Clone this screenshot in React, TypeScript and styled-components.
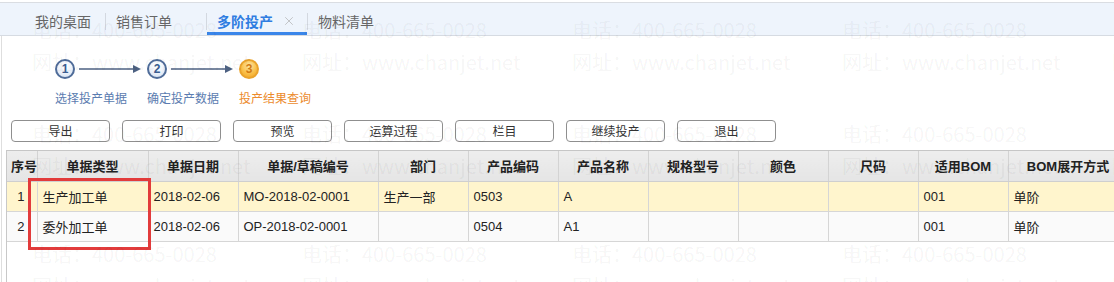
import React from "react";
import styled, { createGlobalStyle } from "styled-components";
import { X } from "lucide-react";

const Global = createGlobalStyle`
  html, body { margin: 0; padding: 0; background: #fff; }
  body {
    font-family: "Liberation Sans", "Noto Sans CJK SC", sans-serif;
    font-size: 13px;
    color: #333;
    overflow: hidden;
  }
  * { box-sizing: border-box; }
`;

const Page = styled.div`
  position: relative;
  width: 1114px;
  height: 282px;
  overflow: hidden;
  display: flex;
  flex-direction: column;
`;

const TabBar = styled.div`
  margin-top: 2px;
  height: 34px;
  border-top: 1px solid #dadde2;
  border-bottom: 1px solid #d6dbe2;
  background: #eef4fc;
  display: flex;
  align-items: stretch;
  padding-left: 24px;
  flex-shrink: 0;
`;

const Tab = styled.div<{ $active?: boolean; $first?: boolean }>`
  display: flex;
  align-items: center;
  padding: 3px ${(p) => (p.$first ? "14px" : "11px")} 0 ${(p) => (p.$first ? "11px" : "10px")};
  font-family: "Noto Sans CJK SC", sans-serif;
  font-size: 14px;
  font-weight: ${(p) => (p.$active ? 700 : 400)};
  color: ${(p) => (p.$active ? "#2f7de1" : "#666")};
  box-shadow: ${(p) => (p.$active ? "inset 0 -3px 0 #3a86ea" : "none")};
`;

const Close = styled.span<{ $show?: boolean }>`
  display: inline-flex;
  margin-left: 9px;
  width: 14px;
  color: #a9a9a9;
  visibility: ${(p) => (p.$show ? "visible" : "hidden")};
`;

const Sep = styled.div`
  width: 1px;
  align-self: center;
  height: 17px;
  margin-top: 4px;
  background: #d3d8e0;
`;

const Content = styled.div`
  flex: 1;
  margin-left: 1px;
  border-left: 1px solid #dedede;
  display: flex;
  flex-direction: column;
  min-height: 0;
`;

const Steps = styled.div`
  display: flex;
  padding: 23px 0 0 53px;
`;

const Step = styled.div`
  width: 92px;
  display: flex;
  flex-direction: column;
`;

const StepTop = styled.div`
  display: flex;
  align-items: center;
  height: 20px;
`;

const Circle = styled.span<{ $active?: boolean }>`
  width: 20px;
  height: 20px;
  flex-shrink: 0;
  border-radius: 50%;
  border: 2px solid ${(p) => (p.$active ? "#eaa32c" : "#4f6c99")};
  background: ${(p) =>
    p.$active
      ? "radial-gradient(circle at 50% 30%, #ffe9a6 0%, #f9c04a 55%, #f2a21f 100%)"
      : "radial-gradient(circle at 50% 30%, #ffffff 0%, #eef3fa 50%, #cddbef 100%)"};
  color: ${(p) => (p.$active ? "#d27a12" : "#3b5d91")};
  font-family: "Liberation Sans", sans-serif;
  font-weight: 700;
  font-size: 12px;
  display: flex;
  align-items: center;
  justify-content: center;
  line-height: 1;
`;

const ArrowSvg = styled.svg`
  margin-left: 4px;
  flex-shrink: 0;
`;

const StepLabel = styled.div<{ $active?: boolean }>`
  margin-top: 11px;
  font-family: "Noto Sans CJK SC", sans-serif;
  font-size: 12px;
  line-height: 16px;
  white-space: nowrap;
  color: ${(p) => (p.$active ? "#ec8b2d" : "#5b7cb0")};
`;

const Toolbar = styled.div`
  display: flex;
  gap: 12px;
  margin-top: 14px;
  padding-left: 9px;
`;

const Button = styled.button`
  width: 99px;
  height: 22px;
  padding: 0;
  border: 1px solid #8f8f8f;
  border-radius: 4px;
  background: #fff;
  font-family: "Noto Sans CJK SC", sans-serif;
  font-size: 12px;
  color: #333;
  line-height: 20px;
`;

const Grid = styled.div`
  position: relative;
  flex: 1;
  margin-top: 8px;
  margin-left: 4px;
  border-top: 1px solid #c6c6c6;
  border-left: 1px solid #c8c8c8;
  overflow: hidden;
`;

const Table = styled.table`
  border-collapse: collapse;
  table-layout: fixed;
  width: 1121px;
`;

const Th = styled.th`
  height: 30px;
  padding: 0 4px;
  background: linear-gradient(#ededed, #e5e5e5);
  border-right: 1px solid #d3d3d3;
  border-bottom: 1px solid #cfcfcf;
  font-family: "Liberation Sans", "Noto Sans CJK SC", sans-serif;
  font-size: 13px;
  font-weight: 700;
  color: #222;
  text-align: center;
  white-space: nowrap;
`;

const Tr = styled.tr<{ $hl?: boolean }>`
  background: ${(p) => (p.$hl ? "#fff5cd" : "#fafafa")};
`;

const Td = styled.td<{ $num?: boolean }>`
  height: 30px;
  padding: ${(p) => (p.$num ? "0 12px 0 0" : "0 5px")};
  border-right: 1px solid #d6d6d6;
  border-bottom: 1px solid #d6d6d6;
  font-family: "Liberation Sans", "Noto Sans CJK SC", sans-serif;
  font-size: 13px;
  color: #222;
  text-align: ${(p) => (p.$num ? "right" : "left")};
  white-space: nowrap;
  overflow: hidden;
`;

const Mark = styled.div`
  position: absolute;
  left: 21px;
  top: 27px;
  width: 123px;
  height: 72px;
  border: 3px solid #e23b3b;
  pointer-events: none;
`;

const Watermark = styled.div`
  position: absolute;
  inset: 0;
  pointer-events: none;
  z-index: 5;
`;

const WmText = styled.span<{ $x: number; $y: number }>`
  position: absolute;
  left: ${(p) => p.$x}px;
  top: ${(p) => p.$y}px;
  font-family: "Noto Sans CJK SC", sans-serif;
  font-size: 20px;
  line-height: 22px;
  color: rgba(0, 0, 0, 0.05);
  white-space: nowrap;
`;

const cols = [30, 111, 90, 140, 90, 90, 90, 90, 90, 90, 90, 120];
const headers = [
  "序号",
  "单据类型",
  "单据日期",
  "单据/草稿编号",
  "部门",
  "产品编码",
  "产品名称",
  "规格型号",
  "颜色",
  "尺码",
  "适用BOM",
  "BOM展开方式",
];
const rows = [
  ["1", "生产加工单", "2018-02-06", "MO-2018-02-0001", "生产一部", "0503", "A", "", "", "", "001", "单阶"],
  ["2", "委外加工单", "2018-02-06", "OP-2018-02-0001", "", "0504", "A1", "", "", "", "001", "单阶"],
];

const buttons = ["导出", "打印", "预览", "运算过程", "栏目", "继续投产", "退出"];
const steps = ["选择投产单据", "确定投产数据", "投产结果查询"];

const telRows = [19, 123, 243];
const urlRows = [51, 155, 275];

const Arrow = () => (
  <ArrowSvg width="62" height="10" viewBox="0 0 62 10">
    <line x1="0" y1="5" x2="56" y2="5" stroke="#4d6182" strokeWidth="1.4" />
    <polygon points="54,1 62,5 54,9" fill="#4d6182" />
  </ArrowSvg>
);

export default function App() {
  return (
    <Page>
      <Global />
      <TabBar>
        <Tab $first>我的桌面</Tab>
        <Sep />
        <Tab>
          销售订单
          <Close>
            <X size={14} strokeWidth={1.1} />
          </Close>
        </Tab>
        <Sep />
        <Tab $active>
          多阶投产
          <Close $show>
            <X size={14} strokeWidth={1.1} />
          </Close>
        </Tab>
        <Sep />
        <Tab>
          物料清单
          <Close>
            <X size={14} strokeWidth={1.1} />
          </Close>
        </Tab>
      </TabBar>
      <Content>
        <Steps>
          {steps.map((s, i) => (
            <Step key={s}>
              <StepTop>
                <Circle $active={i === 2}>{i + 1}</Circle>
                {i < 2 && <Arrow />}
              </StepTop>
              <StepLabel $active={i === 2}>{s}</StepLabel>
            </Step>
          ))}
        </Steps>
        <Toolbar>
          {buttons.map((b) => (
            <Button key={b}>{b}</Button>
          ))}
        </Toolbar>
        <Grid>
          <Table>
            <colgroup>
              {cols.map((w, i) => (
                <col key={i} style={{ width: w }} />
              ))}
            </colgroup>
            <thead>
              <tr>
                {headers.map((h) => (
                  <Th key={h}>{h}</Th>
                ))}
              </tr>
            </thead>
            <tbody>
              {rows.map((r, ri) => (
                <Tr key={ri} $hl={ri === 0}>
                  {r.map((c, ci) => (
                    <Td key={ci} $num={ci === 0}>
                      {c}
                    </Td>
                  ))}
                </Tr>
              ))}
            </tbody>
          </Table>
          <Mark />
        </Grid>
      </Content>
      <Watermark>
        {telRows.map((y) =>
          [0, 1, 2, 3, 4].map((c) => (
            <WmText key={`t${y}-${c}`} $x={32 + 270 * c} $y={y}>
              电话：400-665-0028
            </WmText>
          ))
        )}
        {urlRows.map((y) =>
          [0, 1, 2, 3, 4].map((c) => (
            <WmText key={`u${y}-${c}`} $x={32 + 270 * c} $y={y}>
              网址：www.chanjet.net
            </WmText>
          ))
        )}
      </Watermark>
    </Page>
  );
}
